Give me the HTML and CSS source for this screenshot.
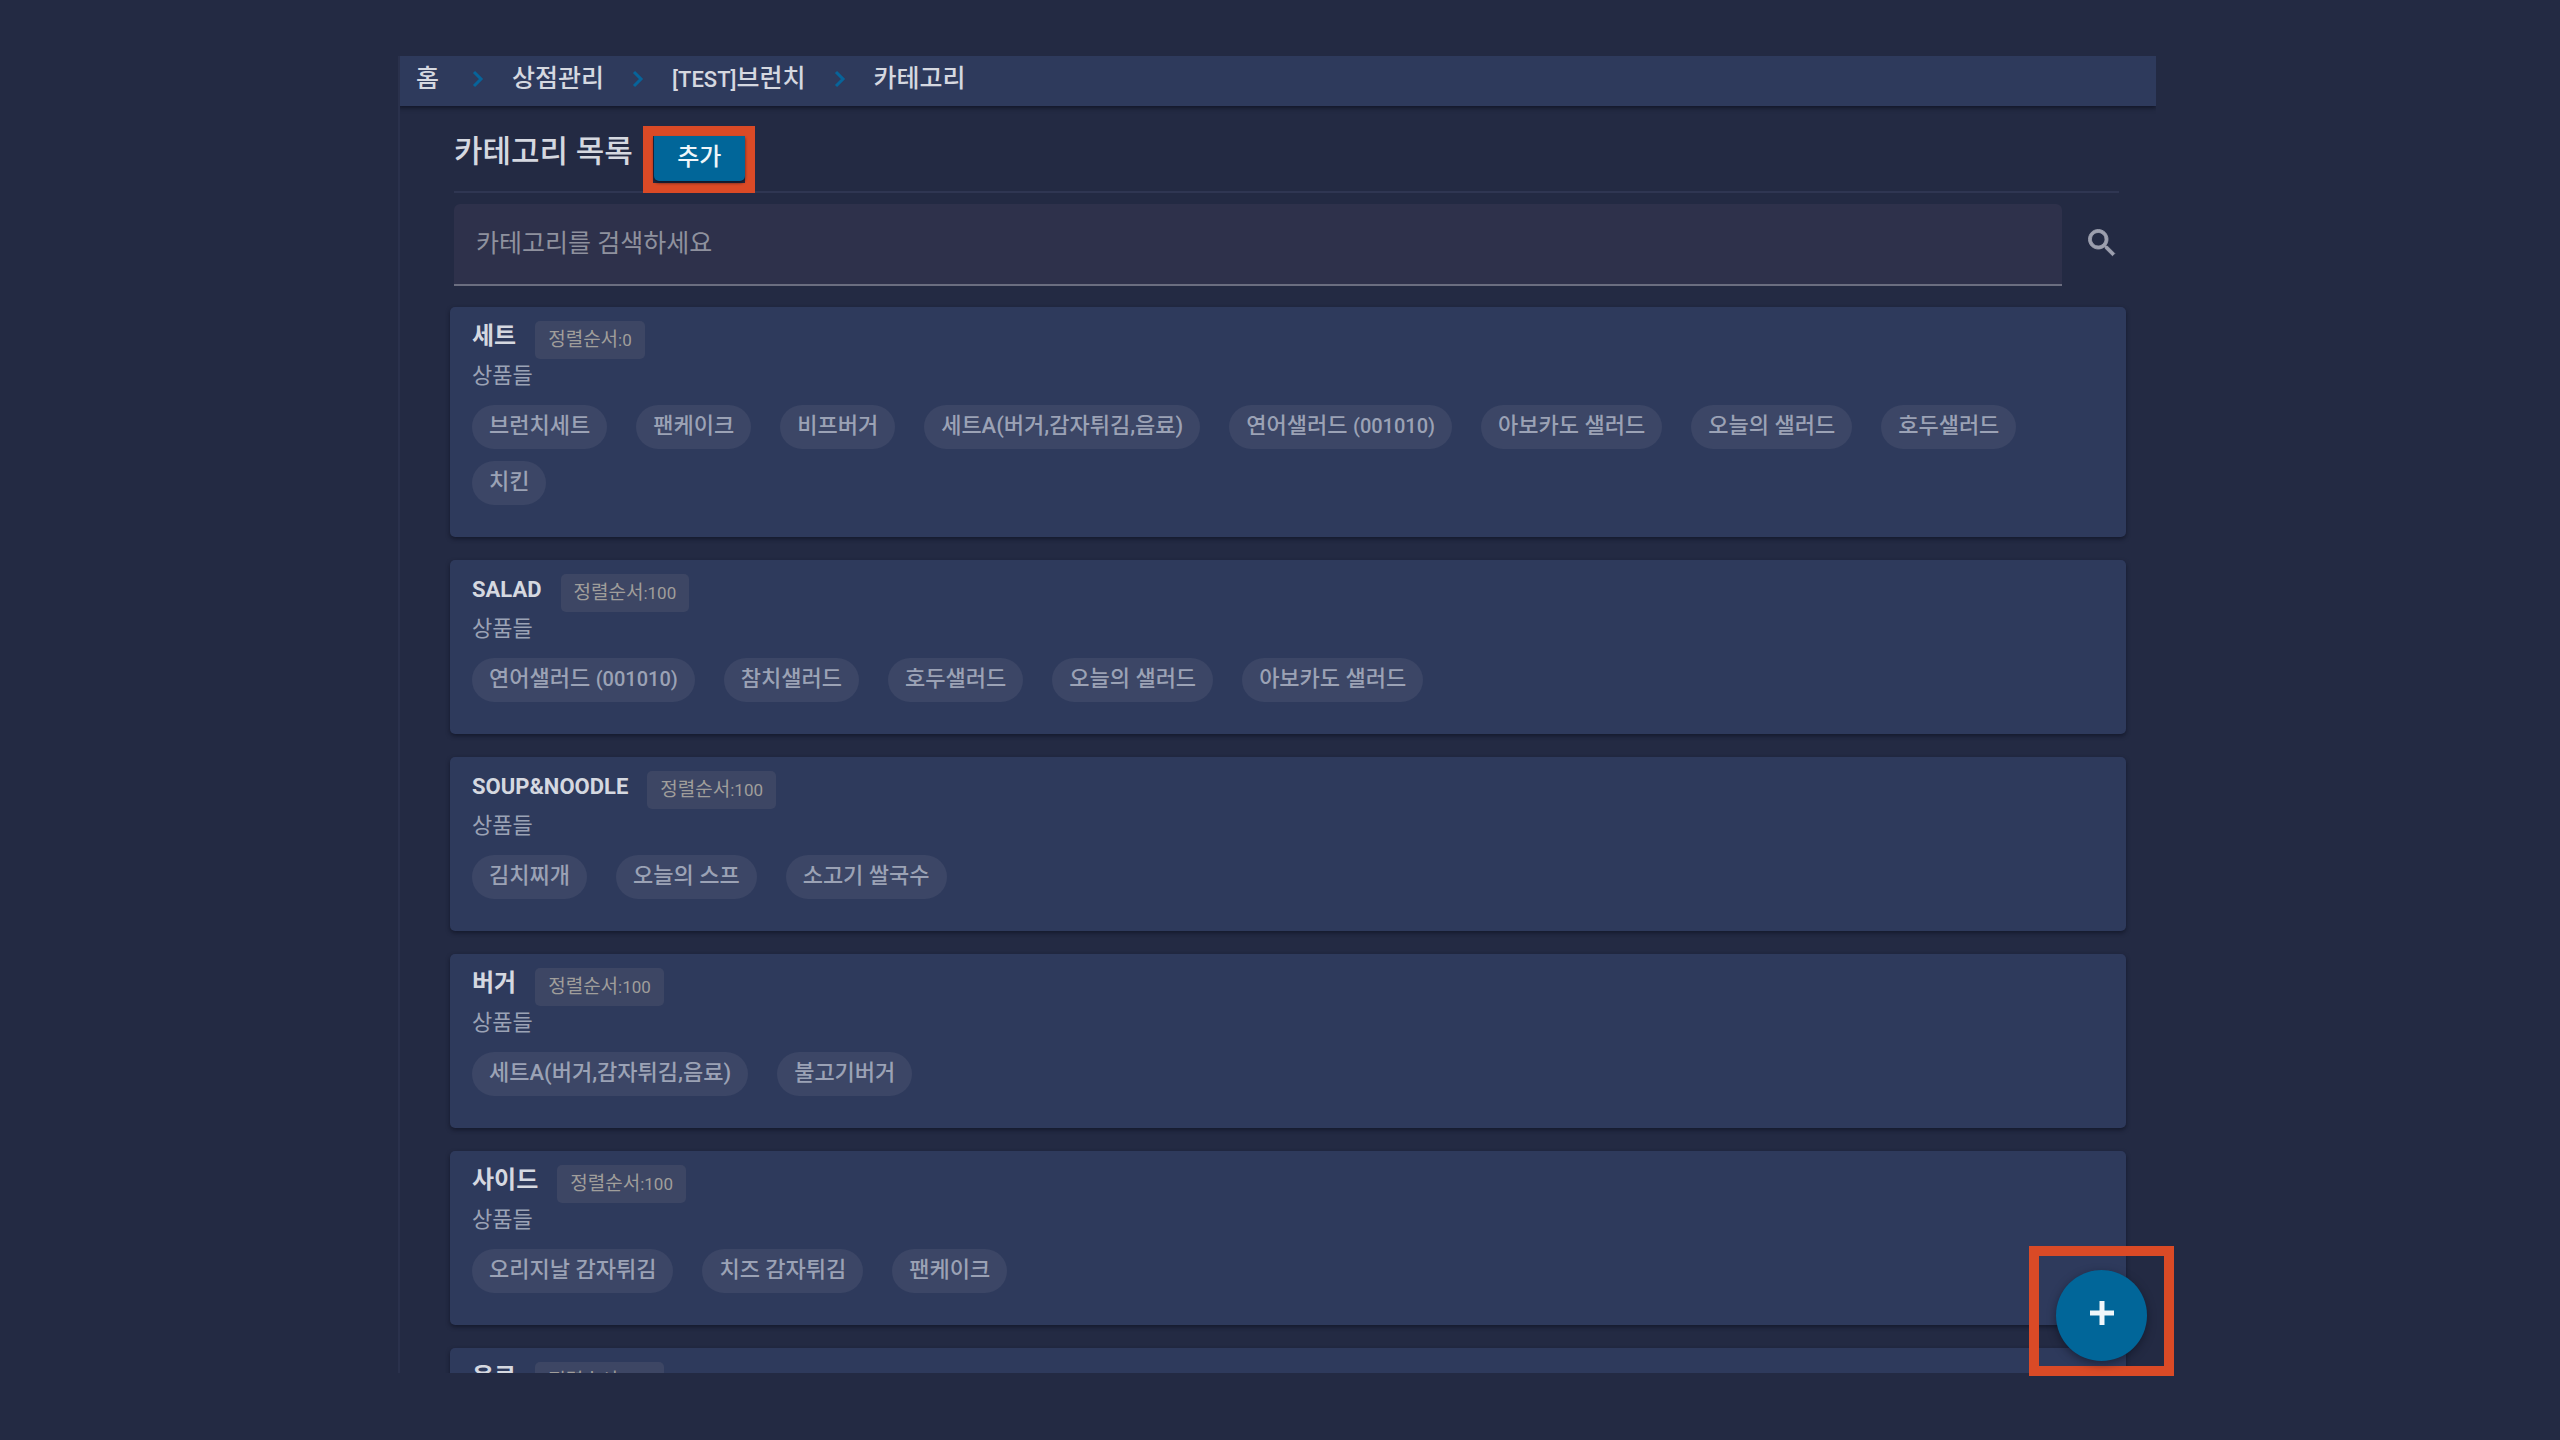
FILE: index.html
```html
<!DOCTYPE html>
<html lang="ko">
<head>
<meta charset="utf-8">
<title>카테고리</title>
<link rel="stylesheet" href="styles.css">
</head>
<body>
<div class="stage">
  <div class="panel">
    <nav class="breadcrumb" aria-label="경로">
      <a class="home" href="#">홈</a>
      <svg class="chevron" viewBox="0 0 12 18" aria-hidden="true"><path d="M2 2l7 7-7 7"/></svg>
      <a href="#">상점관리</a>
      <svg class="chevron" viewBox="0 0 12 18" aria-hidden="true"><path d="M2 2l7 7-7 7"/></svg>
      <a href="#"><span class="latin">[TEST]</span>브런치</a>
      <svg class="chevron" viewBox="0 0 12 18" aria-hidden="true"><path d="M2 2l7 7-7 7"/></svg>
      <a href="#">카테고리</a>
    </nav>
    <main class="content">
      <header class="heading">
        <h1>카테고리 목록</h1>
        <div class="add-frame"><button class="add" type="button">추가</button></div>
      </header>
      <form class="search">
        <input type="text" placeholder="카테고리를 검색하세요" aria-label="카테고리를 검색하세요">
        <button class="search-button" type="button" aria-label="검색">
          <svg viewBox="0 0 24 24" aria-hidden="true"><path d="M15.5 14h-.79l-.28-.27C15.41 12.59 16 11.11 16 9.5 16 5.91 13.09 3 9.5 3S3 5.91 3 9.5 5.91 16 9.5 16c1.61 0 3.09-.59 4.23-1.57l.27.28v.79l5 4.99L20.49 19l-4.99-5zm-6 0C7.01 14 5 11.99 5 9.5S7.01 5 9.5 5 14 7.01 14 9.5 11.99 14 9.5 14z"/></svg>
        </button>
      </form>
      <section class="list">
        <article class="card">
          <div class="card-head"><h2>세트</h2><span class="order">정렬순서<span class="latin">:0</span></span></div>
          <p>상품들</p>
          <ul class="chips"><li>브런치세트</li><li>팬케이크</li><li>비프버거</li><li>세트A(버거,감자튀김,음료)</li><li>연어샐러드 <span class="latin">(001010)</span></li><li>아보카도 샐러드</li><li>오늘의 샐러드</li><li>호두샐러드</li><li>치킨</li></ul>
        </article>
        <article class="card">
          <div class="card-head"><h2><span class="latin">SALAD</span></h2><span class="order">정렬순서<span class="latin">:100</span></span></div>
          <p>상품들</p>
          <ul class="chips"><li>연어샐러드 <span class="latin">(001010)</span></li><li>참치샐러드</li><li>호두샐러드</li><li>오늘의 샐러드</li><li>아보카도 샐러드</li></ul>
        </article>
        <article class="card">
          <div class="card-head"><h2><span class="latin">SOUP&amp;NOODLE</span></h2><span class="order">정렬순서<span class="latin">:100</span></span></div>
          <p>상품들</p>
          <ul class="chips"><li>김치찌개</li><li>오늘의 스프</li><li>소고기 쌀국수</li></ul>
        </article>
        <article class="card">
          <div class="card-head"><h2>버거</h2><span class="order">정렬순서<span class="latin">:100</span></span></div>
          <p>상품들</p>
          <ul class="chips"><li>세트A(버거,감자튀김,음료)</li><li>불고기버거</li></ul>
        </article>
        <article class="card">
          <div class="card-head"><h2>사이드</h2><span class="order">정렬순서<span class="latin">:100</span></span></div>
          <p>상품들</p>
          <ul class="chips"><li>오리지날 감자튀김</li><li>치즈 감자튀김</li><li>팬케이크</li></ul>
        </article>
        <article class="card">
          <div class="card-head"><h2>음료</h2><span class="order">정렬순서<span class="latin">:100</span></span></div>
        </article>
      </section>
    </main>
  </div>
  <div class="fab-frame">
    <button class="fab" type="button" aria-label="카테고리 추가">
      <svg viewBox="0 0 24 24" aria-hidden="true"><path d="M12 0v24M0 12h24"/></svg>
    </button>
  </div>
</div>
</body>
</html>
```
FILE: styles.css
```css
* {
  box-sizing: border-box;
}

body {
  display: flex;
  height: 100vh;
  margin: 0;
  padding: 56px 404px 67px 398px;
  background: #232a43;
  color: #d5d8e0;
  font: 500 24px/32px Roboto, "Noto Sans CJK KR", sans-serif;
}

h1, h2, p, ul {
  margin: 0;
  padding: 0;
}

button {
  border: 0;
  padding: 0;
  font: inherit;
}

.latin {
  font-size: 22px;
}

.stage {
  position: relative;
  flex: 1;
  min-width: 0;
}

.panel {
  height: 100%;
  overflow: hidden;
  border-left: 2px solid #2a314c;
}

.breadcrumb {
  display: flex;
  align-items: center;
  gap: 28px;
  height: 50px;
  margin-left: -2px;
  padding: 0 18px 4px;
  background: #2e3a5c;
  box-shadow: 0 2px 4px rgba(10, 14, 28, 0.7);
  font-size: 25px;
}

.breadcrumb a {
  color: inherit;
  text-decoration: none;
  white-space: nowrap;
}

.breadcrumb .home {
  margin-right: 5px;
}

.chevron {
  width: 12px;
  height: 18px;
  fill: none;
  stroke: #07649a;
  stroke-width: 3;
}

.content {
  padding: 20px 30px 0 50px;
}

.heading {
  display: flex;
  align-items: flex-start;
  height: 67px;
  margin: 0 7px 0 4px;
  border-bottom: 2px solid #2f3652;
}

h1 {
  padding-top: 6px;
  font-size: 31px;
  font-weight: 500;
  line-height: 40px;
}

.add-frame {
  display: flex;
  width: 112px;
  height: 67px;
  margin-left: 10px;
  border: 10px solid #da4a26;
}

.add {
  flex: 1;
  height: 45px;
  margin-left: 1px;
  padding-bottom: 4px;
  border-radius: 0 0 5px 5px;
  background: #016699;
  box-shadow: 0 2px 3px rgba(10, 14, 28, 0.7);
  color: #f0f6fa;
}

.search {
  display: flex;
  align-items: center;
  gap: 22px;
  margin: 11px 6px 21px 4px;
}

.search input {
  flex: 1;
  min-width: 0;
  height: 82px;
  padding: 0 22px 2px;
  border: 0;
  border-bottom: 2px solid #6b6e80;
  border-radius: 6px 6px 0 0;
  background: #2e314b;
  color: #d5d8e0;
  font: 400 25px/32px Roboto, "Noto Sans CJK KR", sans-serif;
}

.search input::placeholder {
  color: #8f919e;
  opacity: 1;
}

.search-button {
  width: 36px;
  height: 36px;
  margin-bottom: 4px;
  background: none;
}

.search-button svg {
  display: block;
  fill: #9c9fae;
  stroke: #9c9fae;
  stroke-width: 0.6;
}

.list {
  display: flex;
  flex-direction: column;
  gap: 23px;
}

.card {
  min-height: 174px;
  padding: 14px 22px 32px;
  border-radius: 5px;
  background: #2e3a5c;
  box-shadow: 0 2px 4px rgba(10, 14, 28, 0.6);
}

.card-head {
  display: flex;
  gap: 19px;
  height: 38px;
}

h2 {
  font-size: 24px;
  font-weight: 700;
  line-height: 30px;
}

.order {
  height: 38px;
  padding: 0 13px;
  border-radius: 5px;
  background: #3d4664;
  color: #a09e9b;
  font-size: 19px;
  font-weight: 400;
  line-height: 38px;
}

.order .latin {
  font-size: 17px;
}

.card p {
  height: 32px;
  color: #9ba2b5;
  font-size: 22px;
  font-weight: 400;
  line-height: 34px;
}

.chips {
  display: flex;
  flex-wrap: wrap;
  gap: 12px 29px;
  margin-top: 14px;
  list-style: none;
}

.chips li {
  height: 44px;
  padding: 0 17px;
  border-radius: 22px;
  background: #3c4666;
  color: #9ba2b5;
  font-size: 22px;
  line-height: 42px;
  white-space: nowrap;
}

.chips .latin {
  font-size: 20px;
}

.fab-frame {
  position: absolute;
  right: -18px;
  bottom: -3px;
  display: flex;
  align-items: center;
  justify-content: center;
  width: 145px;
  height: 130px;
  padding-top: 8px;
  border: 10px solid #da4a26;
}

.fab {
  display: flex;
  align-items: center;
  justify-content: center;
  width: 91px;
  height: 91px;
  padding-bottom: 4px;
  border-radius: 50%;
  background: #016699;
  box-shadow: 0 3px 8px rgba(10, 14, 28, 0.5);
}

.fab svg {
  width: 24px;
  height: 24px;
  stroke: #f0f6fa;
  stroke-width: 5;
}
```
